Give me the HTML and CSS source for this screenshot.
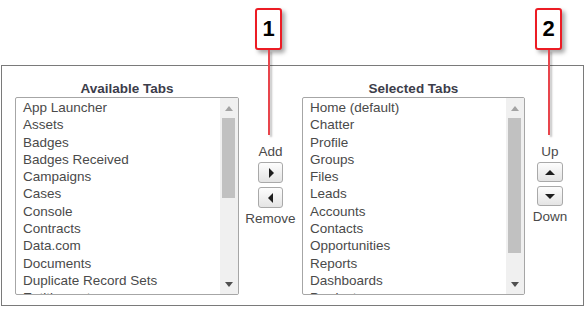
FILE: index.html
```html
<!DOCTYPE html>
<html>
<head>
<meta charset="utf-8">
<link rel="stylesheet" href="styles.css">
</head>
<body>
<div class="page">
  <div class="panel">
    <div class="col list-col left-col">
      <div class="col-title">Available Tabs</div>
      <div class="listbox">
        <ul class="items">
          <li>App Launcher</li>
          <li>Assets</li>
          <li>Badges</li>
          <li>Badges Received</li>
          <li>Campaigns</li>
          <li>Cases</li>
          <li>Console</li>
          <li>Contracts</li>
          <li>Data.com</li>
          <li>Documents</li>
          <li>Duplicate Record Sets</li>
          <li>Entitlements</li>
        </ul>
        <div class="scrollbar">
          <div class="arrow-box"><span class="tri-up"></span></div>
          <div class="thumb" style="height:80px"></div>
          <div class="spacer"></div>
          <div class="arrow-box bottom"><span class="tri-down"></span></div>
        </div>
      </div>
    </div>

    <div class="controls mid">
      <div class="ctl-label">Add</div>
      <button class="btn"><span class="g-right"></span></button>
      <button class="btn"><span class="g-left"></span></button>
      <div class="ctl-label">Remove</div>
    </div>

    <div class="col list-col right-col">
      <div class="col-title">Selected Tabs</div>
      <div class="listbox">
        <ul class="items">
          <li>Home (default)</li>
          <li>Chatter</li>
          <li>Profile</li>
          <li>Groups</li>
          <li>Files</li>
          <li>Leads</li>
          <li>Accounts</li>
          <li>Contacts</li>
          <li>Opportunities</li>
          <li>Reports</li>
          <li>Dashboards</li>
          <li>Products</li>
        </ul>
        <div class="scrollbar">
          <div class="arrow-box"><span class="tri-up"></span></div>
          <div class="thumb" style="height:135px"></div>
          <div class="spacer"></div>
          <div class="arrow-box bottom"><span class="tri-down"></span></div>
        </div>
      </div>
    </div>

    <div class="controls side">
      <div class="ctl-label">Up</div>
      <button class="btn"><span class="g-up"></span></button>
      <button class="btn"><span class="g-down"></span></button>
      <div class="ctl-label">Down</div>
    </div>
  </div>

  <div class="callout callout-1">
    <div class="callout-box">1</div>
    <div class="callout-line"></div>
  </div>
  <div class="callout callout-2">
    <div class="callout-box">2</div>
    <div class="callout-line"></div>
  </div>
</div>
</body>
</html>
```

FILE: styles.css
```css
* { box-sizing: border-box; }

html, body {
  margin: 0;
  padding: 0;
  background: #ffffff;
}

body {
  font-family: "Liberation Sans", Arial, sans-serif;
  font-size: 13.5px;
  color: #4a4a4a;
}

.page {
  position: relative;
  width: 585px;
  height: 313px;
  overflow: hidden;
}

.panel {
  margin: 65px 1px 0 1px;
  height: 241px;
  border: 1px solid #7a7a7a;
  display: flex;
  align-items: flex-start;
  padding: 15px 0 0 13px;
}

.list-col {
  display: flex;
  flex-direction: column;
}

.left-col { width: 224px; }
.right-col { width: 223px; }

.col-title {
  text-align: center;
  font-weight: bold;
  color: #3c3d4a;
  line-height: 16px;
  height: 16px;
}

.listbox {
  height: 198px;
  border: 1px solid #a6a6a6;
  border-radius: 2px;
  display: flex;
  overflow: hidden;
  background: #fff;
}

.items {
  list-style: none;
  margin: 0;
  padding: 1px 0 0 7px;
  flex: 1;
  overflow: hidden;
}

.items li {
  line-height: 17.3px;
  height: 17.3px;
  white-space: nowrap;
}

.scrollbar {
  width: 18px;
  background: #f0f0f0;
  display: flex;
  flex-direction: column;
  align-items: stretch;
}

.arrow-box {
  height: 20px;
  display: flex;
  align-items: center;
  justify-content: center;
  padding-right: 1px;
}

.arrow-box.bottom {
  height: 17px;
  padding-bottom: 2px;
}

.tri-up {
  width: 0;
  height: 0;
  border-left: 4px solid transparent;
  border-right: 4px solid transparent;
  border-bottom: 5px solid #a3a3a3;
}

.tri-down {
  width: 0;
  height: 0;
  border-left: 4px solid transparent;
  border-right: 4px solid transparent;
  border-top: 5px solid #505050;
}

.thumb {
  margin: 0 3px 0 2px;
  background: #c1c1c1;
}

.spacer { flex: 1; }

.controls {
  display: flex;
  flex-direction: column;
  align-items: center;
  margin-top: 63px;
}

.mid { width: 63px; }
.side { width: 50px; }

.ctl-label {
  line-height: 16px;
  height: 16px;
  color: #4a4a4a;
}

.btn {
  width: 25px;
  height: 21px;
  padding: 0;
  margin: 2px 0 3px;
  border: 1px solid #a9a9a9;
  border-radius: 3px;
  background: linear-gradient(#fdfdfd, #e4e4e4);
  display: flex;
  align-items: center;
  justify-content: center;
}

.btn + .btn { margin-top: 1px; }

.side .btn { width: 26px; height: 20px; }

.g-right {
  width: 0; height: 0;
  border-top: 5px solid transparent;
  border-bottom: 5px solid transparent;
  border-left: 5px solid #1e1e1e;
  margin-left: 1px;
}

.g-left {
  width: 0; height: 0;
  border-top: 5px solid transparent;
  border-bottom: 5px solid transparent;
  border-right: 5px solid #1e1e1e;
  margin-right: 1px;
}

.g-up {
  width: 0; height: 0;
  border-left: 5px solid transparent;
  border-right: 5px solid transparent;
  border-bottom: 5px solid #1e1e1e;
}

.g-down {
  width: 0; height: 0;
  border-left: 5px solid transparent;
  border-right: 5px solid transparent;
  border-top: 5px solid #1e1e1e;
}

/* annotation callouts overlaying the panel */
.callout {
  position: absolute;
  top: 8px;
  width: 27px;
  display: flex;
  flex-direction: column;
  align-items: center;
}

.callout-1 { left: 255px; }
.callout-2 { left: 535px; }

.callout-box {
  width: 27px;
  height: 42px;
  border: 2px solid #ec1c24;
  border-radius: 3px;
  background: #fff;
  box-shadow: 3px 3px 4px rgba(0, 0, 0, 0.35);
  color: #000;
  font-weight: bold;
  font-size: 22px;
  line-height: 38px;
  text-align: center;
}

.callout-line {
  width: 2px;
  height: 85px;
  background: #e8454c;
  box-shadow: 2px 2px 2px rgba(0, 0, 0, 0.25);
}
```
